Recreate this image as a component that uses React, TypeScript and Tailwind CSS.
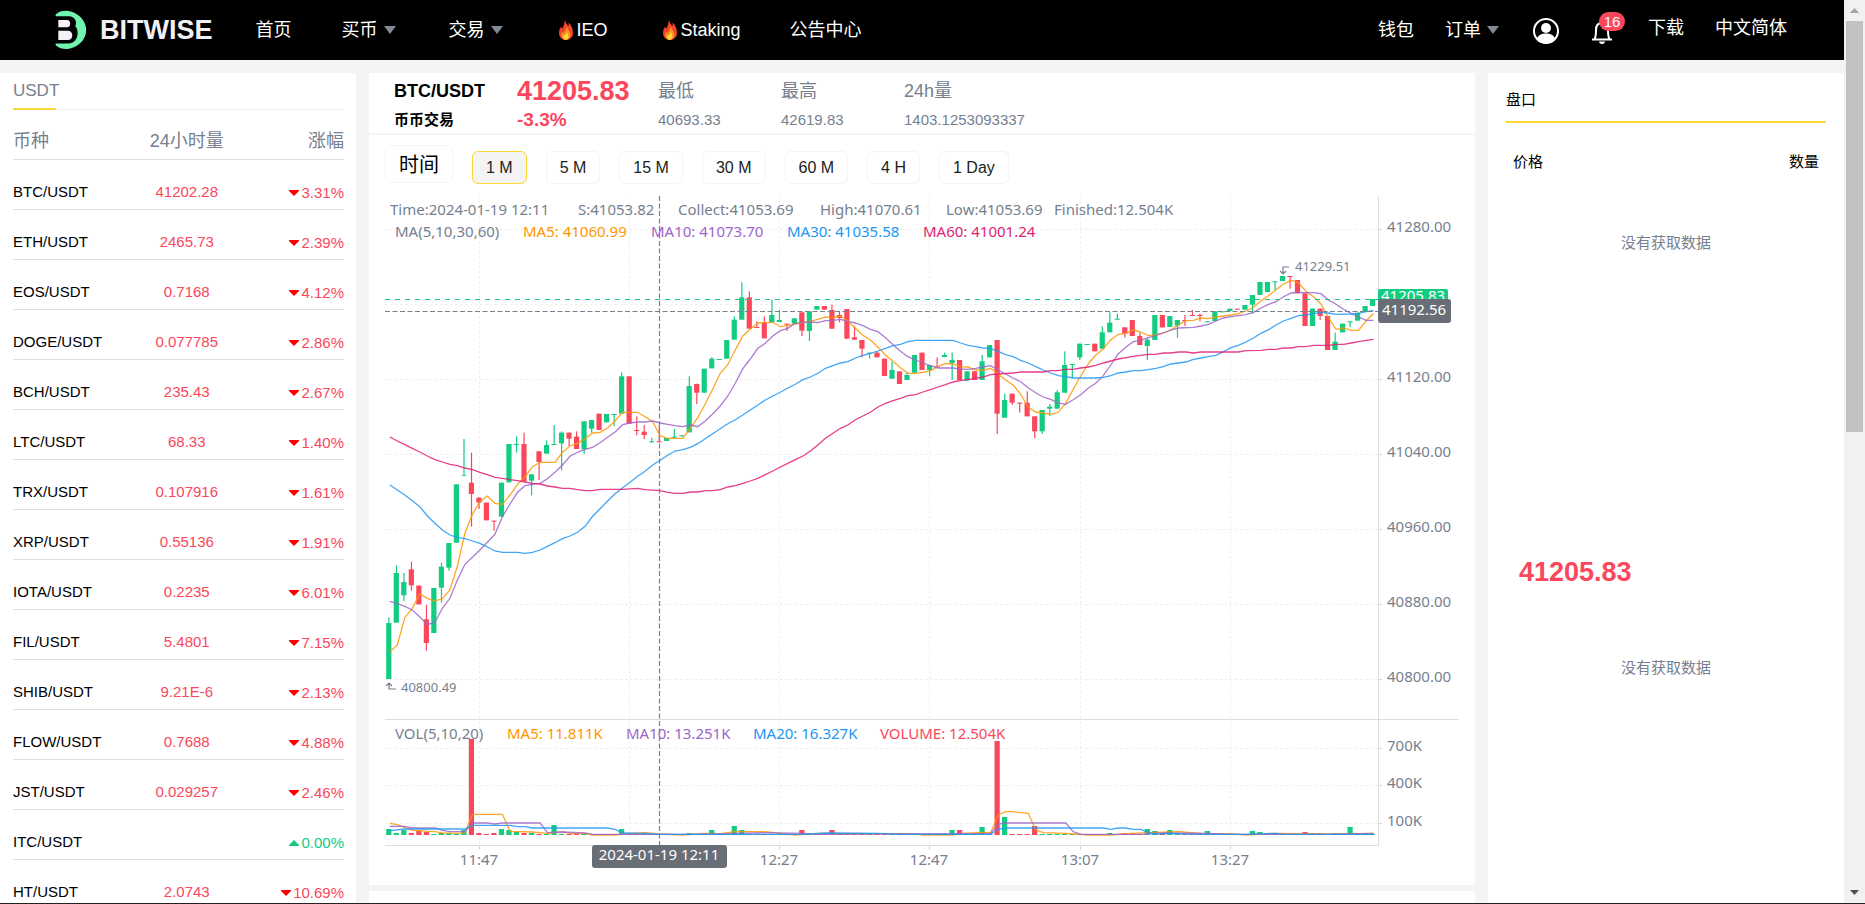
import React, { useState, FunctionComponent } from "react";

type Quote = { pair: string; price: string; change: string; up?: boolean };

const quotes: Quote[] = [
  { pair: "BTC/USDT", price: "41202.28", change: "3.31%" },
  { pair: "ETH/USDT", price: "2465.73", change: "2.39%" },
  { pair: "EOS/USDT", price: "0.7168", change: "4.12%" },
  { pair: "DOGE/USDT", price: "0.077785", change: "2.86%" },
  { pair: "BCH/USDT", price: "235.43", change: "2.67%" },
  { pair: "LTC/USDT", price: "68.33", change: "1.40%" },
  { pair: "TRX/USDT", price: "0.107916", change: "1.61%" },
  { pair: "XRP/USDT", price: "0.55136", change: "1.91%" },
  { pair: "IOTA/USDT", price: "0.2235", change: "6.01%" },
  { pair: "FIL/USDT", price: "5.4801", change: "7.15%" },
  { pair: "SHIB/USDT", price: "9.21E-6", change: "2.13%" },
  { pair: "FLOW/USDT", price: "0.7688", change: "4.88%" },
  { pair: "JST/USDT", price: "0.029257", change: "2.46%" },
  { pair: "ITC/USDT", price: "", change: "0.00%", up: true },
  { pair: "HT/USDT", price: "2.0743", change: "10.69%" },
];

const intervals = ["1 M", "5 M", "15 M", "30 M", "60 M", "4 H", "1 Day"];

// direction, high, body top, body bottom, low
const candles = `g 1102 1119 1287 1287,g 946 969 1118 1118,g 969 996 1036 1053,r 935 958 1006 1022,r 1006 1007 1063 1063,
r 1065 1108 1179 1202,g 1014 1014 1149 1149,g 938 950 1013 1058,g 879 879 953 962,g 703 703 878 878,
g 567 676 678 678,r 608 698 732 830,r 743 743 758 777,r 758 758 811 811,r 812 812 815 842,
g 698 698 800 800,g 582 582 697 697,g 559 582 585 608,r 548 582 694 694,g 673 673 692 736,
r 603 604 636 690,g 571 585 611 611,g 525 582 585 585,g 544 548 580 661,r 548 548 566 588,
r 544 560 597 597,g 514 514 598 612,g 510 510 536 548,r 491 491 540 540,g 492 492 517 517,
g 492 492 495 528,g 367 379 491 491,r 379 379 521 521,r 499 540 543 556,r 525 545 555 567,
g 563 574 577 577,r 525 574 577 577,g 564 564 573 573,g 537 560 563 563,g 556 556 559 559,
g 379 408 547 547,r 401 402 428 462,g 356 356 428 428,g 322 326 355 355,g 327 327 330 330,
g 270 270 326 326,g 199 209 269 269,g 97 142 209 209,r 124 142 236 236,r 214 231 234 234,
r 199 217 265 265,g 149 195 217 217,g 180 210 216 216,r 221 221 224 243,g 205 205 221 221,
r 187 187 242 258,g 184 184 243 273,g 168 168 179 179,r 168 168 179 179,r 164 180 236 236,
r 184 195 204 217,r 177 177 266 266,r 228 262 269 269,r 270 270 296 322,g 308 308 311 326,
r 304 308 322 322,r 326 326 378 378,g 335 360 386 386,r 364 364 402 402,g 367 375 390 390,
g 315 315 368 368,r 308 308 360 360,g 345 345 360 378,r 322 349 352 352,g 308 315 321 321,
g 308 330 339 390,r 330 330 391 391,g 364 364 392 392,r 364 364 390 390,g 315 334 390 390,
g 285 285 322 322,r 270 270 491 552,g 431 450 503 503,r 431 431 458 465,r 458 458 461 488,
r 424 458 499 499,r 499 499 544 564,g 480 480 544 552,g 462 470 476 498,g 420 427 476 476,
g 304 345 428 428,g 342 342 345 384,g 281 281 322 330,g 282 282 285 285,r 281 281 304 304,
g 229 247 296 296,g 187 218 247 247,g 191 206 209 209,r 232 232 251 263,r 210 210 258 258,
r 248 258 285 285,g 263 269 288 330,g 195 195 270 270,r 195 195 232 232,g 198 198 231 231,
g 210 210 227 263,r 195 210 213 228,r 180 195 198 198,r 191 195 198 214,g 214 214 217 217,
g 184 184 213 213,g 184 184 187 187,g 176 176 183 183,r 176 176 179 179,g 165 165 179 179,
g 135 135 164 191,g 96 96 135 135,g 96 96 126 126,g 94 94 97 120,g 78 78 93 93,
r 78 78 81 116,r 90 90 130 130,r 130 130 228 228,g 176 176 228 228,r 176 176 198 210,
r 198 198 300 300,g 248 275 300 300,g 221 221 247 247,g 214 214 217 231,g 188 188 212 212,
g 168 168 186 186,g 147 147 168 168`
  .split(",")
  .map((row) => {
    const [side, ...values] = row.trim().split(" ");
    return { color: side === "g" ? "#11CC81" : "#FA475C", values: values.map(Number) };
  });

const volumes: Record<number, number> = {
  0: 6, 1: 2, 2: 5, 3: 2, 4: 4, 5: 3, 7: 2, 8: 2, 10: 5, 11: 96, 12: 2, 14: 2, 15: 6, 16: 5, 17: 3, 18: 2, 19: 2,
  22: 10, 31: 6, 40: 2, 43: 5, 46: 9, 47: 5, 55: 5, 59: 5, 61: 2, 66: 2, 68: 2, 75: 5, 76: 5, 79: 8, 81: 94, 82: 18,
  86: 9, 96: 2, 98: 2, 101: 6, 102: 4, 104: 5, 109: 4, 115: 4, 116: 3, 122: 3, 123: 2, 124: 2, 126: 2, 128: 8,
};

const ma5 = "0:1206 1:1185 2:1103 3:1075 4:1032 5:1045 6:1053 7:1046 8:1020 9:948 10:850 11:793 12:755 13:738 14:760 15:763 16:735 17:703 18:680 19:650 20:637 22:637 23:607 24:588 25:580 26:566 27:549 28:547 29:534 30:513 31:487 33:487 34:500 35:515 36:557 37:565 39:565 40:535 41:503 42:462 43:418 44:370 45:344 46:300 47:258 48:238 49:219 51:217 52:230 53:227 54:222 55:218 56:214 57:208 58:201 59:203 60:199 61:213 62:235 63:256 64:270 65:292 66:315 67:334 68:353 69:370 70:370 71:367 72:362 73:350 74:340 75:342 76:350 77:351 78:360 79:361 80:355 81:372 82:390 83:405 84:432 85:472 86:486 87:489 88:493 89:487 90:460 91:418 92:378 93:342 94:315 95:297 96:269 97:253 98:250 99:240 100:246 101:257 102:254 103:249 104:240 105:225 106:212 107:211 108:204 109:206 110:201 111:198 112:195 113:191 114:183 115:172 116:152 117:137 118:119 119:102 120:91 121:98 122:124 123:140 124:162 125:204 126:238 127:234 128:241 129:241 130:213 131:190";
const ma10 = "0:1054 1:1061 2:1069 3:1080 4:1101 5:1124 6:1117 7:1075 8:1045 9:990 10:943 11:922 12:900 13:877 14:853 15:800 16:762 17:727 18:707 19:703 20:700 21:686 22:667 23:645 24:619 25:607 26:598 27:592 28:578 29:562 30:546 31:524 32:519 33:516 34:516 35:513 36:519 37:523 38:527 39:530 40:525 41:530 42:513 43:492 44:468 45:438 46:400 47:356 48:327 49:295 50:280 51:258 52:242 53:235 54:220 55:218 56:216 57:218 58:212 59:211 60:208 61:214 62:219 63:227 64:238 65:245 66:263 67:284 68:304 69:320 70:330 71:339 72:347 73:354 75:354 76:357 77:358 78:355 79:351 80:347 81:360 82:372 83:384 84:395 85:413 86:428 87:441 88:448 89:459 90:463 91:449 92:434 93:415 94:400 95:377 96:345 97:311 98:292 99:275 100:271 101:263 102:256 103:249 104:240 105:234 107:232 108:228 109:223 110:213 111:204 112:200 113:197 114:194 115:187 116:174 117:163 118:155 119:140 120:129 121:127 122:128 123:128 124:131 125:150 126:163 127:178 128:190 129:201 130:211 131:211";
const ma30 = "0:704 1:720 2:735 3:752 4:770 5:798 6:820 7:840 8:855 9:862 10:866 11:873 12:880 13:891 14:903 15:907 17:907 18:910 19:907 20:900 21:889 22:878 23:866 24:858 25:847 26:829 27:799 28:776 29:753 30:731 31:713 32:697 33:679 34:664 35:645 36:631 37:616 38:603 39:599 40:592 41:581 42:566 43:551 44:536 45:521 46:509 47:495 48:480 49:465 50:450 51:438 52:427 53:414 54:403 55:389 56:381 57:370 58:355 59:347 60:339 61:335 62:324 63:316 64:310 65:303 66:295 67:287 68:283 69:275 70:271 75:271 76:279 77:286 78:290 79:294 80:295 81:304 82:314 83:320 84:331 85:339 86:350 87:360 88:369 89:377 90:380 91:384 94:384 95:382 96:377 97:369 98:366 99:362 100:362 101:359 102:355 103:350 104:342 105:339 106:336 107:328 108:324 109:320 110:316 111:305 112:293 113:286 114:276 115:264 116:250 117:239 118:225 119:213 120:205 121:197 122:195 123:191 124:187 125:189 126:193 128:192 129:190 130:185 131:182";
const ma60 = "0:561 1:573 2:584 3:595 4:606 5:618 6:629 7:636 8:643 9:647 10:654 11:659 12:667 13:674 14:682 15:685 16:689 17:692 18:696 19:700 20:702 21:708 22:711 23:715 24:715 25:719 26:722 27:722 28:718 31:718 33:715 34:719 36:722 37:727 38:730 39:730 40:726 41:726 42:722 43:722 44:719 45:711 46:707 47:700 48:693 49:685 50:674 51:663 52:651 53:640 54:629 55:618 56:603 57:585 58:565 59:550 60:535 61:525 62:509 63:498 64:487 65:471 66:460 67:452 68:445 69:437 70:434 71:426 72:419 73:411 74:404 75:396 76:392 77:388 78:385 79:381 80:374 81:372 83:369 84:366 87:366 88:362 89:362 90:358 91:358 92:354 93:351 94:346 95:339 97:327 99:319 101:313 102:313 103:309 104:309 105:306 106:306 107:309 108:306 113:306 114:302 116:301 117:298 118:298 119:294 120:294 121:290 122:290 123:286 125:286 126:283 127:283 128:279 129:275 130:271 131:268";

const vol5 = "0:400 1:404 2:413 3:421 4:422 5:424 6:425 7:429 9:430 10:428 11:373 15:373 16:424 19:426 21:430 23:425 24:430 26:431 27:435 30:435 31:432 34:428 36:432 39:435 42:430 44:431 46:425 50:425 52:430 54:435 57:430 65:431 70:431 71:435 75:435 76:430 79:427 80:428 81:375 82:365 83:365 84:368 85:370 86:420 87:428 90:430 93:435 96:435 98:431 101:428 105:425 108:430 112:431 114:435 118:430 125:432 131:430";
const vol10 = "0:409 2:409 3:414 6:414 7:421 8:425 10:425 11:399 13:399 14:402 15:399 20:399 21:428 23:426 26:429 27:433 40:433 45:431 50:428 55:430 57:433 80:430 81:402 82:399 90:399 91:425 92:433 100:433 103:429 109:430 112:433 125:433 131:430";
const vol20 = "0:422 2:417 10:417 11:406 16:406 17:410 18:410 19:414 29:414 30:418 31:429 34:430 36:433 55:433 58:429 65:430 68:433 80:433 81:418 82:414 95:414 96:418 97:414 98:414 99:418 100:418 101:428 102:432 104:430 107:433 114:433 118:430 119:433 131:433";

const candleX = (i: number) => 388.8 + i * 7.51;

const toPoints = (series: string, top: number) =>
  series
    .split(" ")
    .map((point) => {
      const [i, y] = point.split(":").map(Number);
      return `${(candleX(i) + 1).toFixed(1)},${(top + y / 3).toFixed(1)}`;
    })
    .join(" ");

const priceTicks = [
  { y: 229, label: "41280.00" },
  { y: 304, label: "" },
  { y: 379, label: "41120.00" },
  { y: 454, label: "41040.00" },
  { y: 529, label: "40960.00" },
  { y: 604, label: "40880.00" },
  { y: 679, label: "40800.00" },
];

const volumeTicks = [
  { y: 748, label: "700K" },
  { y: 785, label: "400K" },
  { y: 823, label: "100K" },
];

const timeTicks = [
  { x: 479, label: "11:47" },
  { x: 629, label: "" },
  { x: 779, label: "12:27" },
  { x: 929, label: "12:47" },
  { x: 1080, label: "13:07" },
  { x: 1230, label: "13:27" },
];

const Caret: FunctionComponent = () => (
  <svg className="h-2 w-3" viewBox="0 0 12 8">
    <path d="M0 0h12L6 8z" fill="#828a96" />
  </svg>
);

const Flame: FunctionComponent = () => (
  <svg className="h-5 w-[14px]" viewBox="0 0 14 20">
    <path d="M6 0c1 3 1.500 4 3.500 6 .3-1.300.2-2.300 0-3.500C12.500 5.500 14 9 14 13c0 4-3 7-7 7s-7-3-7-7c0-3 1.200-5 2-6.500.3 1 .6 1.700 1.200 2.200C4.600 6 5.500 3.500 6 0z" fill="#f4402c" />
    <path d="M7.500 6c.6 2.500 3.500 4.200 4 7.500.4 3.500-1.800 6.500-4.700 6.500-2.800 0-4.800-2.300-4.600-5 .1-1.500.8-2.600 1.500-3.600.3 1 .6 1.500 1.200 1.800C6 11 7.300 9 7.500 6z" fill="#fb8c1e" />
    <path d="M7.400 11c.5 1.800 2.200 2.800 2.200 5 0 2.300-1.200 3.800-2.900 3.800-1.600 0-2.700-1.400-2.600-3 .1-1 .6-1.700 1-2.200.3.5.5.8.9.9.7-1.300 1.400-2.500 1.400-4.500z" fill="#ffd43b" />
  </svg>
);

const Logo: FunctionComponent = () => (
  <svg className="h-[42px] w-[33px]" viewBox="20 15 100 126">
    <path d="M22 31C40 15 68 18 86 30c38 24 38 72 0 96-18 12-46 14-64-2z" fill="#6ff5ae" />
    <path d="M20 36h42c18 0 27 17 19 31 14 12 10 52-20 52H20z" fill="#000" />
    <path d="M30 48h27c12 0 12 22 0 22H30z" fill="#f4f2f7" />
    <path d="M30 80h31c15 0 15 28 0 28H30z" fill="#f4f2f7" />
  </svg>
);

const Header: FunctionComponent = () => {
  return (
    <header className="flex h-[60px] shrink-0 items-center justify-between bg-black pr-[57px] pl-[55px] text-lg text-white">
      <div className="flex items-center">
        <a href="#home" className="flex items-center gap-3">
          <Logo />
          <span className="text-[27px] font-bold text-[#f0f0f5]">BITWISE</span>
        </a>
        <nav className="ml-[43px] flex items-center">
          <a href="#index">首页</a>
          <button className="ml-[50px] flex items-center gap-[6px]">买币<Caret /></button>
          <button className="ml-[53px] flex items-center gap-[6px]">交易<Caret /></button>
          <a href="#ieo" className="ml-[56px] flex items-center gap-1"><Flame />IEO</a>
          <a href="#staking" className="ml-[55px] flex items-center gap-1"><Flame />Staking</a>
          <a href="#notice" className="ml-[49px]">公告中心</a>
        </nav>
      </div>
      <div className="flex items-center">
        <a href="#wallet">钱包</a>
        <button className="ml-[31px] flex items-center gap-[6px]">订单<Caret /></button>
        <button aria-label="账户" className="ml-[33px]">
          <svg className="h-7 w-7" viewBox="0 0 28 28">
            <circle cx="14" cy="15" r="12" fill="none" stroke="#fff" strokeWidth="2" />
            <circle cx="14" cy="12" r="5" fill="#fff" />
            <path d="M5 23c1-4 4.500-5.500 9-5.500s8 1.500 9 5.500c-2 3-5 4.500-9 4.500S7 26 5 23z" fill="#fff" />
          </svg>
        </button>
        <button aria-label="通知" className="relative ml-[31px]">
          <svg className="h-7 w-[22px]" viewBox="0 0 22 28">
            <path d="M1 23.500h20M3.500 23c1.500-2 1.500-5 1.500-9 0-4.500 2.500-7 6-7s6 2.500 6 7c0 4 0 7 1.500 9" fill="none" stroke="#fff" strokeWidth="2" />
            <path d="M8 25.500h6c0 1.600-1.300 2.500-3 2.500s-3-.9-3-2.500z" fill="#fff" />
          </svg>
          <span className="absolute -top-[4px] left-2 flex h-[19px] w-[26px] items-center justify-center rounded-full bg-[#fa475c] text-[15px]">16</span>
        </button>
        <a href="#download" className="mb-1 ml-[35px]">下载</a>
        <button className="mb-1 ml-[31px]">中文简体</button>
      </div>
    </header>
  );
};

const Markets: FunctionComponent = () => {
  return (
    <aside className="bg-white pr-3 pl-[13px]">
      <div className="flex border-b border-[#efefef]">
        <button className="-mb-px h-[37px] w-[43px] border-b-2 border-[#fdd835] text-left text-[17px] whitespace-nowrap text-[#76808f]">USDT</button>
      </div>
      <table className="w-full table-fixed">
        <thead>
          <tr className="h-[49px] border-b border-[#dfdfdf] text-lg text-[#76808f]">
            <th className="w-3/8 pt-[14px] text-left font-normal">币种</th>
            <th className="w-[30%] pt-[14px] font-normal">24小时量</th>
            <th className="pt-[14px] text-right font-normal">涨幅</th>
          </tr>
        </thead>
        <tbody>
          {quotes.map((quote) => (
            <tr key={quote.pair} className="h-[50px] border-b border-[#dfdfdf] text-[15px]">
              <td className="pt-4 text-black">{quote.pair}</td>
              <td className="pt-4 text-center text-[#fa475c]">{quote.price}</td>
              <td className={quote.up ? "pt-4 text-right text-[#11cc81]" : "pt-4 text-right text-[#fa475c]"}>
                <span className="inline-flex items-center gap-[2px]">
                  <svg className="h-[6px] w-[10px]" viewBox="0 0 10 6">
                    {quote.up ? <path d="M0 5 5 0l5 5v1H0z" fill="#11cc81" /> : <path d="M0 0h10v1L5 6 0 1z" fill="#f00" />}
                  </svg>
                  {quote.change}
                </span>
              </td>
            </tr>
          ))}
        </tbody>
      </table>
    </aside>
  );
};

const Chart: FunctionComponent = () => {
  return (
    <svg className="mt-3 block h-auto w-full font-['Noto_Sans','Noto_Sans_CJK_SC',sans-serif] text-[15px]" viewBox="385 196 1074 677" fill="#76808F">
      <g stroke="#EDEDED" strokeDasharray="2.5 2.5">
        {[...priceTicks, ...volumeTicks].map((tick) => (
          <path key={tick.y} d={`M385 ${tick.y + 0.5}H1378`} />
        ))}
        {timeTicks.map((tick) => (
          <path key={tick.x} d={`M${tick.x + 0.5} 196V845`} />
        ))}
      </g>
      <g stroke="#DDDDDD" fill="none">
        <path d="M1378.500 196V845M385 845.500H1379M385 719.500H1459" />
        {[...priceTicks, ...volumeTicks].map((tick) => (
          <path key={tick.y} d={`M1378 ${tick.y + 0.5}h4`} />
        ))}
        {timeTicks.map((tick) => (
          <path key={tick.x} d={`M${tick.x + 0.5} 845v5`} />
        ))}
      </g>

      {candles.map(({ color, values: [high, top, bottom, low] }, i) => (
        <g key={i} fill={color}>
          <rect x={candleX(i) - 0.5} y={250 + high / 3} width="1.2" height={(low - high) / 3} />
          <rect x={candleX(i) - 2.6} y={250 + top / 3} width="5.2" height={(bottom - top) / 3} />
          <rect x={candleX(i) - 2.6} y={835 - (volumes[i] || 1)} width="5.2" height={volumes[i] || 1} />
        </g>
      ))}

      <g fill="none" strokeWidth="1.3" strokeOpacity="0.85">
        <polyline points={toPoints(ma5, 250)} stroke="#FF9600" />
        <polyline points={toPoints(ma10, 250)} stroke="#9D65C9" />
        <polyline points={toPoints(ma30, 250)} stroke="#2196F3" />
        <polyline points={toPoints(ma60, 250)} stroke="#E11D74" />
        <polyline points={toPoints(vol5, 690)} stroke="#FF9600" />
        <polyline points={toPoints(vol10, 690)} stroke="#9D65C9" />
        <polyline points={toPoints(vol20, 690)} stroke="#2196F3" />
      </g>

      <path d="M385 299.500H1378" stroke="#11CC81" strokeDasharray="5 5" />
      <path d="M385 311.500H1378M659.500 196V845" stroke="#76808F" strokeWidth="1.200" strokeDasharray="5 2.500" />

      <text x="390" y="215">Time:2024-01-19 12:11</text>
      <text x="578" y="215">S:41053.82</text>
      <text x="678" y="215">Collect:41053.69</text>
      <text x="820" y="215">High:41070.61</text>
      <text x="946" y="215">Low:41053.69</text>
      <text x="1054" y="215">Finished:12.504K</text>
      <text x="395" y="237">MA(5,10,30,60)</text>
      <text x="523" y="237" fill="#FF9600">MA5: 41060.99</text>
      <text x="651" y="237" fill="#9D65C9">MA10: 41073.70</text>
      <text x="787" y="237" fill="#2196F3">MA30: 41035.58</text>
      <text x="923" y="237" fill="#E11D74">MA60: 41001.24</text>
      <text x="395" y="739">VOL(5,10,20)</text>
      <text x="507" y="739" fill="#FF9600">MA5: 11.811K</text>
      <text x="626" y="739" fill="#9D65C9">MA10: 13.251K</text>
      <text x="753" y="739" fill="#2196F3">MA20: 16.327K</text>
      <text x="880" y="739" fill="#FA475C">VOLUME: 12.504K</text>

      {priceTicks.map((tick) => (
        <text key={tick.y} x="1387" y={tick.y + 3}>{tick.label}</text>
      ))}
      {volumeTicks.map((tick) => (
        <text key={tick.y} x="1387" y={tick.y + 3}>{tick.label}</text>
      ))}
      {timeTicks.map((tick) => (
        <text key={tick.x} x={tick.x} y="865" textAnchor="middle">{tick.label}</text>
      ))}

      <path d="M396 689h-7v-6m-3 3 3-3 3 3" fill="none" stroke="#76808F" strokeWidth="1.200" />
      <text x="401" y="692" className="text-[13px]">40800.49</text>
      <path d="M1289 267h-6v7m-3-3 3 3 3-3" fill="none" stroke="#76808F" strokeWidth="1.200" />
      <text x="1295" y="271" className="text-[13px]">41229.51</text>

      <rect x="1378" y="289" width="70" height="24" rx="2" fill="#11CC81" />
      <text x="1381" y="301" fill="#fff">41205.83</text>
      <rect x="1378" y="299" width="73" height="24" rx="3" fill="#686D76" />
      <text x="1382" y="315" fill="#fff">41192.56</text>
      <rect x="592" y="845" width="135" height="23" rx="3" fill="#686D76" />
      <text x="659" y="860" fill="#fff" textAnchor="middle">2024-01-19 12:11</text>
    </svg>
  );
};

const Trade: FunctionComponent = () => {
  const [active, setActive] = useState("1 M");

  const stats = [
    { label: "最低", value: "40693.33" },
    { label: "最高", value: "42619.83" },
    { label: "24h量", value: "1403.1253093337" },
  ];

  return (
    <main className="flex min-w-0 flex-col gap-[6px]">
      <section className="bg-white pb-3">
        <div className="flex h-[62px] border-b-2 border-[#f4f4f4] pl-[25px] whitespace-nowrap">
          <div className="w-[123px] font-bold text-black">
            <h1 className="mt-1 text-lg leading-7">BTC/USDT</h1>
            <p className="text-[15px] leading-[30px]">币币交易</p>
          </div>
          <div className="w-[141px] font-bold text-[#fa475c]">
            <p className="mt-1 text-[27px] leading-7">41205.83</p>
            <p className="text-[19px] leading-[30px]">-3.3%</p>
          </div>
          {stats.map((stat) => (
            <div key={stat.label} className="w-[123px] text-[#76808f]">
              <p className="mt-1 text-lg leading-7">{stat.label}</p>
              <p className="text-[15px] leading-[30px]">{stat.value}</p>
            </div>
          ))}
        </div>
        <div className="px-4">
          <div className="flex items-end gap-[19px] pt-[10px]">
            <span className="mb-px h-[38px] rounded-md border border-[#f4f4f4] px-[13px] text-xl leading-[38px]">时间</span>
            {intervals.map((item) => (
              <button
                key={item}
                onClick={() => setActive(item)}
                className={
                  item === active
                    ? "h-[33px] rounded-md border border-[#fdd835] bg-[#f4f4f4] px-[13px] text-base leading-[30px] text-[#222]"
                    : "h-[33px] rounded-md border border-[#f4f4f4] px-[13px] text-base leading-[30px] text-[#222]"
                }
              >
                {item}
              </button>
            ))}
          </div>
          <Chart />
        </div>
      </section>
      <section className="h-20 bg-white"></section>
    </main>
  );
};

const OrderBook: FunctionComponent = () => {
  return (
    <aside className="bg-white px-[18px] text-[15px] text-black">
      <h2 className="h-[50px] border-b-2 border-[#fdd835] pt-4">盘口</h2>
      <div className="flex justify-between px-[7px] pt-7">
        <span>价格</span>
        <span>数量</span>
      </div>
      <p className="pt-[58px] text-center text-[#76808f]">没有获取数据</p>
      <p className="mt-[298px] pl-[13px] text-[27px] font-bold text-[#fa475c]">41205.83</p>
      <p className="pt-[64px] text-center text-[#76808f]">没有获取数据</p>
    </aside>
  );
};

const ScrollTrack: FunctionComponent = () => (
  <div className="flex w-[21px] shrink-0 flex-col items-center justify-between bg-[#f1f1f1] pb-2">
    <div className="flex w-full flex-col items-center">
      <svg className="my-2 h-[5px] w-[9px]" viewBox="0 0 9 5">
        <path d="M0 5h9L4.500 0z" fill="#a3a3a3" />
      </svg>
      <div className="h-[411px] w-[17px] bg-[#c1c1c1]"></div>
    </div>
    <svg className="h-[5px] w-[9px]" viewBox="0 0 9 5">
      <path d="M0 0h9L4.500 5z" fill="#505050" />
    </svg>
  </div>
);

export default function App() {
  return (
    <div className="flex h-screen overflow-hidden border-b border-[#222] bg-[#f4f4f4] font-['Liberation_Sans','Noto_Sans_CJK_SC',sans-serif]">
      <div className="flex min-w-0 flex-1 flex-col overflow-hidden">
        <Header />
        <div className="grid grid-cols-[356px_minmax(0,1fr)_356px] gap-[13px] pt-[13px]">
          <Markets />
          <Trade />
          <OrderBook />
        </div>
      </div>
      <ScrollTrack />
    </div>
  );
}
